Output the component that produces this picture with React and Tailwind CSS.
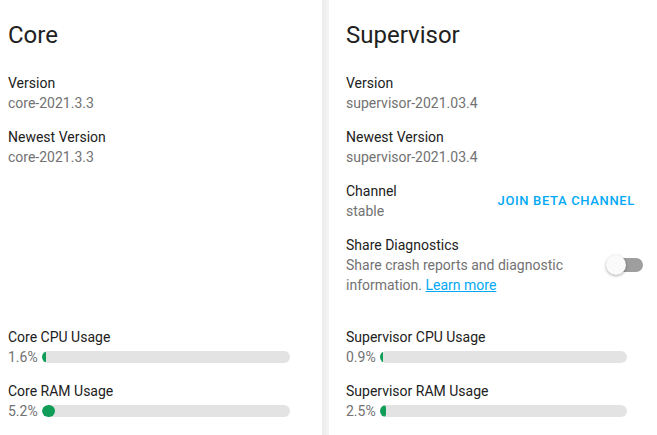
import React from "react";

const font = { fontFamily: "Roboto, 'Noto Sans', sans-serif" };

function Row({ label, value }) {
  return (
    <div className="py-[7px]">
      <div className="text-[14px] leading-[20px] text-[#212121]">{label}</div>
      <div className="text-[14px] leading-[20px] text-[#727272]">{value}</div>
    </div>
  );
}

function Metric({ label, value, pct }) {
  return (
    <div className="py-[7px] pr-4">
      <div className="text-[14px] leading-[20px] text-[#212121]">{label}</div>
      <div className="flex items-center h-[20px]">
        <div className="w-[34px] shrink-0 text-[14px] leading-[20px] text-[#727272]">{value}</div>
        <div className="flex-1 h-[12px] rounded-[6px] bg-[#e3e3e3] overflow-hidden">
          <div
            className="h-full rounded-[6px] bg-[#0f9d58] min-w-[3px]"
            style={{ width: `${pct}%` }}
          />
        </div>
      </div>
    </div>
  );
}

export default function App() {
  return (
    <div className="w-[657px] h-[435px] overflow-hidden bg-white flex" style={font}>
      <div className="w-[322px] shrink-0 h-full flex flex-col pl-2 pr-4 bg-white">
        <div className="mt-[19px] text-[24px] leading-[32px] text-[#212121]">Core</div>
        <div className="mt-[15px]">
          <Row label="Version" value="core-2021.3.3" />
          <Row label="Newest Version" value="core-2021.3.3" />
        </div>
        <div className="mt-auto mb-[7px]">
          <Metric label="Core CPU Usage" value="1.6%" pct={1.6} />
          <Metric label="Core RAM Usage" value="5.2%" pct={5.2} />
        </div>
      </div>
      <div className="w-[7px] shrink-0 h-full bg-gradient-to-r from-[#ececec] to-[#f4f4f4]" />
      <div className="w-[330px] shrink-0 h-full flex flex-col pl-[17px] pr-4 bg-white">
        <div className="mt-[19px] text-[24px] leading-[32px] text-[#212121]">Supervisor</div>
        <div className="mt-[15px]">
          <Row label="Version" value="supervisor-2021.03.4" />
          <Row label="Newest Version" value="supervisor-2021.03.4" />
          <div className="flex items-center justify-between">
            <Row label="Channel" value="stable" />
            <button className="px-2 h-[36px] text-[13px] font-medium tracking-[0.65px] text-[#03a9f4] uppercase">
              Join beta channel
            </button>
          </div>
          <div className="flex items-center justify-between py-[7px]">
            <div className="w-[240px]">
              <div className="text-[14px] leading-[20px] text-[#212121]">Share Diagnostics</div>
              <div className="text-[14px] leading-[20px] text-[#727272]">
                Share crash reports and diagnostic information.{" "}
                <a className="text-[#03a9f4] underline">Learn more</a>
              </div>
            </div>
            <div className="relative w-[36px] h-[20px] mr-0">
              <div className="absolute left-[1px] right-0 top-[3px] h-[14px] rounded-[7px] bg-[#9e9e9e]" />
              <div className="absolute left-[-1px] top-0 w-[20px] h-[20px] rounded-full bg-[#fafafa] shadow-[0_1px_3px_rgba(0,0,0,0.35)]" />
            </div>
          </div>
        </div>
        <div className="mt-auto mb-[7px]">
          <Metric label="Supervisor CPU Usage" value="0.9%" pct={0.9} />
          <Metric label="Supervisor RAM Usage" value="2.5%" pct={2.5} />
        </div>
      </div>
    </div>
  );
}
